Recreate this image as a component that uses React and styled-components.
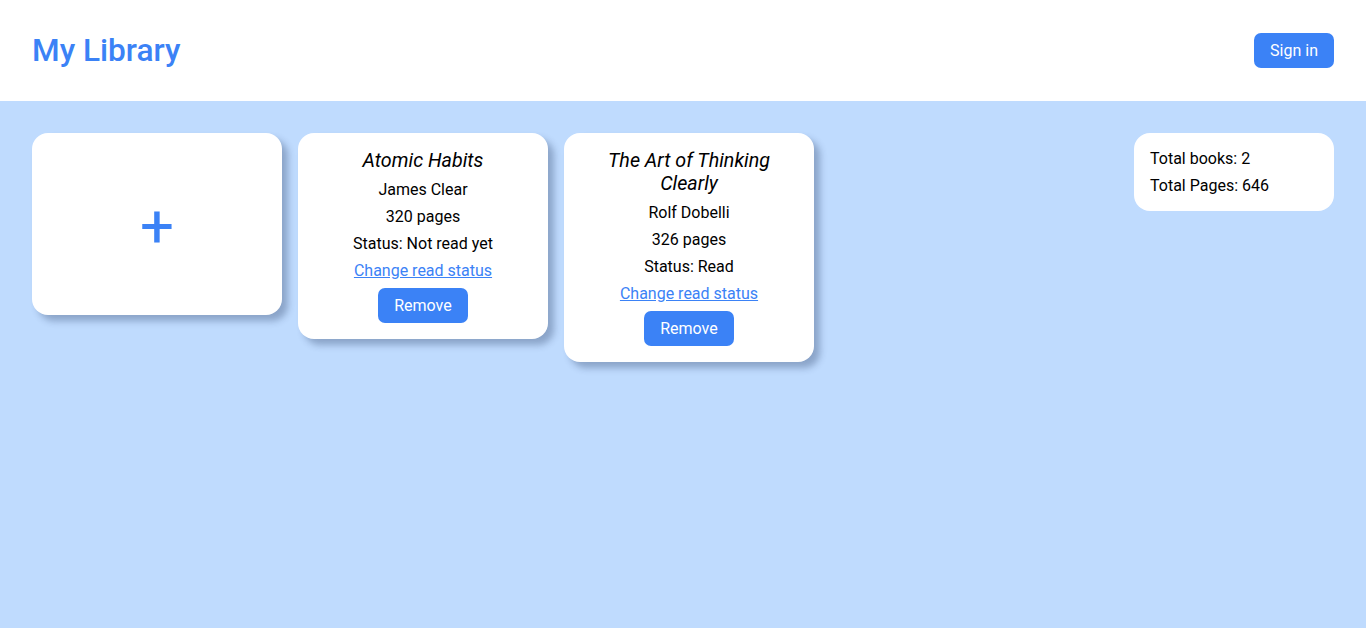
import React from 'react';
import styled, { createGlobalStyle } from 'styled-components';

const GlobalStyle = createGlobalStyle`
	* {
		box-sizing: border-box;
	}

	body {
		margin: 0;
		font-family: Roboto, "Liberation Sans", sans-serif;
		background: #bfdbfe;
		color: #000;
	}
`;

const Header = styled.header`
	display: flex;
	align-items: center;
	justify-content: space-between;
	height: 101px;
	padding: 0 32px;
	background: #fff;
`;

const Title = styled.h1`
	margin: 0;
	font-size: 31.6px;
	font-weight: 500;
	line-height: normal;
	color: #3b82f6;
`;

const Button = styled.button`
	border: none;
	border-radius: 7px;
	padding: 8px 16px;
	background: #3b82f6;
	color: #fff;
	font-family: inherit;
	font-size: 16px;
	line-height: normal;
	cursor: pointer;
`;

const Main = styled.main`
	display: flex;
	justify-content: space-between;
	align-items: flex-start;
	padding: 32px;
	min-height: calc(100vh - 101px);
`;

const Books = styled.div`
	display: flex;
	flex-wrap: wrap;
	align-items: flex-start;
	gap: 16px;
`;

const Card = styled.div`
	width: 250px;
	background: #fff;
	border-radius: 16px;
	box-shadow: 6px 6px 7px rgba(20, 40, 80, 0.3);
`;

const AddCard = styled(Card)`
	height: 182px;
	display: flex;
	align-items: center;
	justify-content: center;
	padding-top: 6px;
	font-size: 60px;
	line-height: 1;
	color: #3b82f6;
	cursor: pointer;
`;

const BookCard = styled(Card)`
	display: flex;
	flex-direction: column;
	align-items: center;
	gap: 8px;
	padding: 16px;
	text-align: center;
	line-height: normal;
`;

const BookTitle = styled.span`
	font-size: 19.7px;
	line-height: 23px;
	font-style: italic;
	padding: 0 20px;
`;

const Line = styled.span`
	font-size: 16px;
`;

const Toggle = styled.a`
	font-size: 16px;
	color: #3b82f6;
	text-decoration: underline;
	cursor: pointer;
`;

const Stats = styled.div`
	display: flex;
	flex-direction: column;
	gap: 8px;
	width: 200px;
	padding: 16px;
	background: #fff;
	border-radius: 16px;
	font-size: 16px;
	line-height: normal;
`;

const books = [
	{ title: 'Atomic Habits', author: 'James Clear', pages: 320, read: false },
	{ title: 'The Art of Thinking Clearly', author: 'Rolf Dobelli', pages: 326, read: true },
];

const App = () => {
	const totalPages = books.reduce((sum, b) => sum + b.pages, 0);

	return (
		<>
			<GlobalStyle />
			<Header>
				<Title>My Library</Title>
				<Button>Sign in</Button>
			</Header>
			<Main>
				<Books>
					<AddCard>+</AddCard>
					{books.map((book) => (
						<BookCard key={book.title}>
							<BookTitle>{book.title}</BookTitle>
							<Line>{book.author}</Line>
							<Line>{book.pages} pages</Line>
							<Line>Status: {book.read ? 'Read' : 'Not read yet'}</Line>
							<Toggle>Change read status</Toggle>
							<Button>Remove</Button>
						</BookCard>
					))}
				</Books>
				<Stats>
					<span>Total books: {books.length}</span>
					<span>Total Pages: {totalPages}</span>
				</Stats>
			</Main>
		</>
	);
};

export default App;
